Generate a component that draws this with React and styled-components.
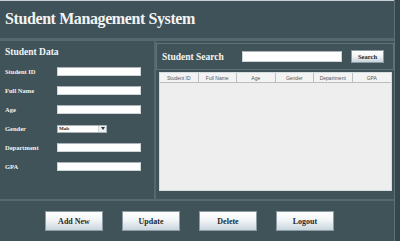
import React from 'react'
import styled, { createGlobalStyle } from 'styled-components'

const GlobalStyle = createGlobalStyle`
  html, body {
    margin: 0;
    padding: 0;
    background: #35464c;
  }
  body {
    width: 400px;
    height: 241px;
    overflow: hidden;
  }
`

const fields = [
  { label: 'Student ID' },
  { label: 'Full Name' },
  { label: 'Age' },
  { label: 'Gender', select: true },
  { label: 'Department' },
  { label: 'GPA' },
]

const columns = ['Student ID', 'Full Name', 'Age', 'Gender', 'Department', 'GPA']

const actions = ['Add New', 'Update', 'Delete', 'Logout']

function App() {
  return (
    <Window>
      <GlobalStyle />
      <Header>
        <h1>Student Management System</h1>
      </Header>

      <Main>
        <DataPanel>
          <PanelTitle>Student Data</PanelTitle>
          <Form>
            {fields.map((f) => (
              <FieldRow key={f.label}>
                <Label>{f.label}</Label>
                {f.select ? (
                  <Select>
                    <span>Male</span>
                    <Arrow>
                      <svg width="4" height="3" viewBox="0 0 4 3">
                        <path d="M0 0 L4 0 L2 3 Z" fill="#333" />
                      </svg>
                    </Arrow>
                  </Select>
                ) : (
                  <TextBox />
                )}
              </FieldRow>
            ))}
          </Form>
        </DataPanel>

        <SearchPanel>
          <SearchBar>
            <PanelTitle>Student Search</PanelTitle>
            <SearchInput />
            <Button $small>Search</Button>
          </SearchBar>
          <Table>
            <HeadRow>
              {columns.map((c) => (
                <HeadCell key={c}>{c}</HeadCell>
              ))}
            </HeadRow>
          </Table>
        </SearchPanel>
      </Main>

      <Footer>
        {actions.map((a) => (
          <Button key={a}>{a}</Button>
        ))}
      </Footer>
    </Window>
  )
}

export default App

const Window = styled.div`
  width: 395px;
  height: 241px;
  display: flex;
  flex-direction: column;
  background: #405359;
  border-right: 1px solid #5e7077;
  box-sizing: border-box;
  font-family: "Liberation Serif", "Times New Roman", serif;
`

const Header = styled.div`
  height: 38px;
  border-top: 1px solid #c9d0d3;
  box-sizing: border-box;
  display: flex;
  align-items: center;
  padding: 0 5px 2px;
  background: #3f5259;

  h1 {
    margin: 0;
    font-size: 16px;
    letter-spacing: -0.4px;
    font-weight: 700;
    color: #f2f4f4;
  }
`

const Main = styled.div`
  height: 163px;
  display: flex;
  border-top: 3px solid #56686e;
  border-bottom: 2px solid #56686e;
  box-sizing: border-box;
`

const DataPanel = styled.div`
  width: 157px;
  border-right: 2px solid #56686e;
  box-sizing: border-box;
  padding: 5px 0 0 5px;
`

const PanelTitle = styled.div`
  font-size: 9.5px;
  line-height: 12px;
  font-weight: 700;
  color: #f2f4f4;
`

const Form = styled.div`
  margin-top: 9px;
  display: flex;
  flex-direction: column;
  gap: 10px;
`

const FieldRow = styled.div`
  display: flex;
  align-items: center;
  height: 9px;
`

const Label = styled.div`
  width: 52px;
  font-size: 6.5px;
  font-weight: 700;
  color: #f0f2f2;
`

const TextBox = styled.div`
  width: 84px;
  height: 9px;
  box-sizing: border-box;
  background: #ffffff;
  border: 1px solid #cdd5d8;
  border-top-color: #aab4b8;
`

const Select = styled.div`
  width: 50px;
  height: 8px;
  box-sizing: border-box;
  background: #ffffff;
  border: 1px solid #aab4b8;
  display: flex;
  align-items: center;
  justify-content: space-between;
  font-size: 5px;
  font-weight: 700;
  color: #222;
  padding-left: 1px;

  span {
    line-height: 6px;
  }
`

const Arrow = styled.div`
  width: 7px;
  height: 6px;
  background: #eef1f2;
  border-left: 1px solid #cfd6d9;
  display: flex;
  align-items: center;
  justify-content: center;
`

const SearchPanel = styled.div`
  flex: 1;
  display: flex;
  flex-direction: column;
  padding: 2px 0 0 0;
`

const SearchBar = styled.div`
  height: 27px;
  box-sizing: border-box;
  border: 1px solid #60727a;
  display: flex;
  align-items: center;
  padding: 0 9px 0 5px;

  ${PanelTitle} {
    width: 80px;
  }
`

const SearchInput = styled.div`
  width: 100px;
  height: 11px;
  box-sizing: border-box;
  background: #ffffff;
  border: 1px solid #cdd5d8;
  border-top-color: #aab4b8;
  margin-right: 9px;
`

const Button = styled.button`
  width: ${(p) => (p.$small ? '33px' : '58px')};
  height: ${(p) => (p.$small ? '13px' : '20px')};
  padding: 0;
  box-sizing: border-box;
  border: 1px solid #8d9ca4;
  background: linear-gradient(#ffffff 0%, #f2f5f7 45%, #c8d5dd 100%);
  font-family: "Liberation Serif", "Times New Roman", serif;
  font-size: ${(p) => (p.$small ? '6.5px' : '8px')};
  font-weight: 700;
  color: #1f2a2e;
`

const Table = styled.div`
  margin: 2px 2px 0 3px;
  height: 119px;
  background: #eeeeee;
  border: 1px solid #d3dcdf;
  box-sizing: border-box;
`

const HeadRow = styled.div`
  display: grid;
  grid-template-columns: repeat(6, 1fr);
  height: 9px;
  background: #f3f3f3;
  border-bottom: 1px solid #b9bec0;
`

const HeadCell = styled.div`
  font-family: "Liberation Sans", Arial, sans-serif;
  font-size: 5px;
  color: #555;
  display: flex;
  align-items: center;
  justify-content: center;
  border-right: 1px solid #b9bec0;

  &:last-child {
    border-right: none;
  }
`

const Footer = styled.div`
  flex: 1;
  display: flex;
  align-items: flex-start;
  padding: 10px 0 0 45px;
  gap: 19px;
`
